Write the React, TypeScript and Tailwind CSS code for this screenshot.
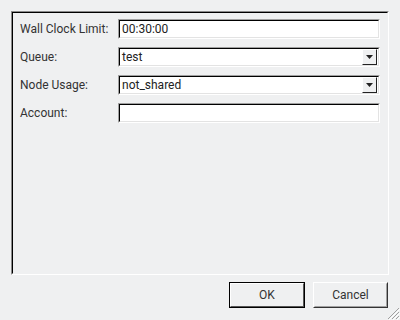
import React from 'react';

const font = { fontFamily: 'Roboto, "Liberation Sans", sans-serif' };

const Field: React.FC<{ value?: string; combo?: boolean }> = ({ value, combo }) => (
  <div className="h-[20px] border border-t-[#a0a0a0] border-l-[#a0a0a0] border-r-white border-b-white">
    <div className="flex h-full items-center border border-t-black border-l-black border-r-[#e3e3e3] border-b-[#e3e3e3] bg-white">
      <span className="flex-1 pl-[2px] text-[12px] leading-none text-[#222]">{value}</span>
      {combo && (
        <div className="mr-px flex h-[16px] w-[15px] items-center justify-center border border-t-white border-l-white border-r-[#222] border-b-[#222] bg-[#eff0f1]">
          <svg width="7" height="4" viewBox="0 0 7 4">
            <path d="M0 0h7L3.5 4z" fill="#222" />
          </svg>
        </div>
      )}
    </div>
  </div>
);

const rows: { label: string; value?: string; combo?: boolean }[] = [
  { label: 'Wall Clock Limit:', value: '00:30:00' },
  { label: 'Queue:', value: 'test', combo: true },
  { label: 'Node Usage:', value: 'not_shared', combo: true },
  { label: 'Account:' },
];

export default function App() {
  return (
    <div className="relative h-[320px] w-[400px] overflow-hidden bg-[#eff0f1]" style={font}>
      <div className="ml-[11px] pt-[11px]">
        <div className="h-[264px] w-[378px] border border-t-[#8a8a8a] border-l-[#8a8a8a] border-r-white border-b-white">
          <div className="h-full border border-t-black border-l-black border-r-[#eff0f1] border-b-[#eff0f1] pl-[7px] pr-[7px] pt-[6px]">
            <div className="flex flex-col gap-[8px]">
              {rows.map((r) => (
                <div key={r.label} className="flex items-center">
                  <span className="w-[98px] text-[12px] text-[#333]">{r.label}</span>
                  <div className="flex-1">
                    <Field value={r.value} combo={r.combo} />
                  </div>
                </div>
              ))}
            </div>
          </div>
        </div>
      </div>
      <div className="mr-[12px] mt-[7px] flex justify-end gap-[8px]">
        <button className="h-[26px] w-[76px] border border-black bg-[#eff0f1] text-[12px] text-[#333]">
          <div className="flex h-full items-center justify-center border border-t-white border-l-white border-r-[#555] border-b-[#555]">
            OK
          </div>
        </button>
        <button className="h-[26px] w-[75px] border border-t-white border-l-white border-r-[#333] border-b-[#333] bg-[#eff0f1] text-[12px] text-[#333]">
          <div className="flex h-full items-center justify-center border border-transparent border-r-[#a0a0a0] border-b-[#a0a0a0]">
            Cancel
          </div>
        </button>
      </div>
      <svg className="absolute bottom-0 right-0" width="16" height="16" viewBox="0 0 16 16">
        <path d="M15 4L4 15M15 8L8 15M15 12L12 15" stroke="#a0a0a0" strokeWidth="1" />
        <path d="M16 5L5 16M16 9L9 16M16 13L13 16" stroke="#fff" strokeWidth="1" />
      </svg>
    </div>
  );
}
